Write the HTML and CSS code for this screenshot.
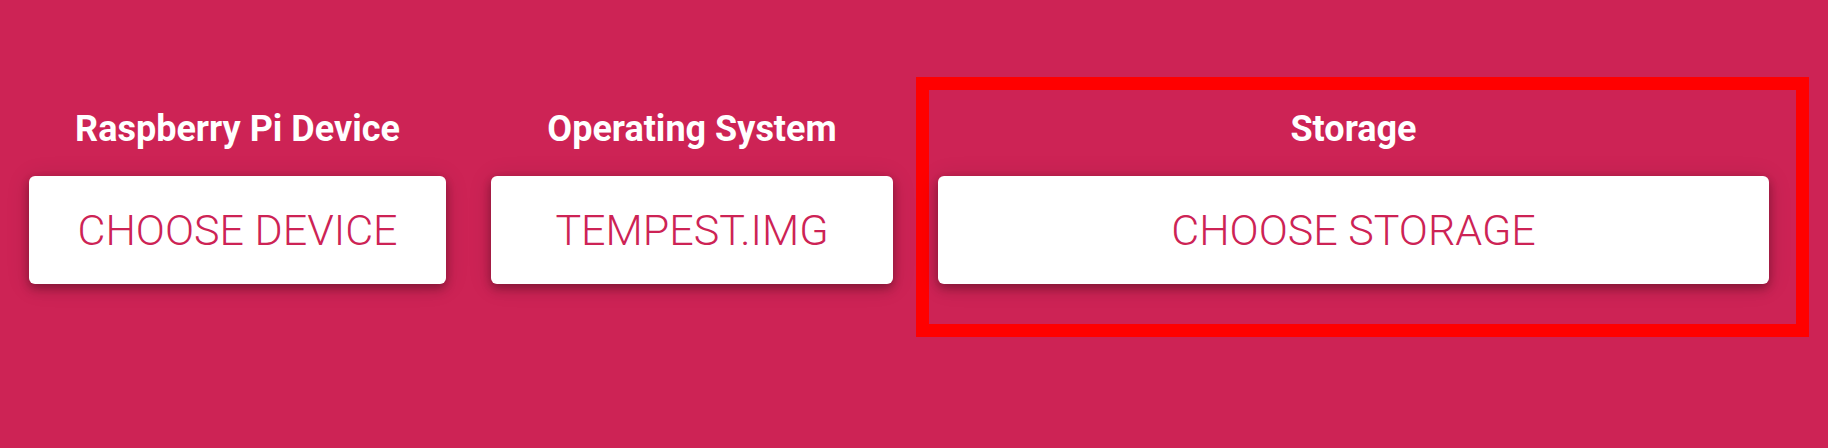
FILE: index.html
```html
<!DOCTYPE html>
<html lang="en">
<head>
<meta charset="utf-8">
<meta name="viewport" content="width=device-width, initial-scale=1">
<title>Raspberry Pi Imager</title>
<link rel="stylesheet" href="styles.css">
</head>
<body>
<main class="steps">
  <section class="step">
    <h2 class="step-title" id="device-title">Raspberry Pi Device</h2>
    <button class="step-button" type="button" aria-describedby="device-title">CHOOSE DEVICE</button>
  </section>
  <section class="step step-system">
    <h2 class="step-title" id="system-title">Operating System</h2>
    <button class="step-button" type="button" aria-describedby="system-title">TEMPEST.IMG</button>
  </section>
  <section class="step step-storage">
    <h2 class="step-title" id="storage-title">Storage</h2>
    <button class="step-button" type="button" aria-describedby="storage-title">CHOOSE STORAGE</button>
  </section>
</main>
</body>
</html>
```

FILE: styles.css
```css
* {
  box-sizing: border-box;
}

body {
  margin: 0;
  background: #cd2355;
  font-family: Roboto, "Liberation Sans", sans-serif;
}

.steps {
  display: grid;
  grid-template-columns: 417fr 424fr 893fr;
  column-gap: 23px;
  padding: 77px 19px 0 29px;
}

.step {
  display: flex;
  flex-direction: column;
  gap: 26px;
  padding-top: 31px;
}

.step-system {
  padding-left: 22px;
}

.step-storage {
  border: 13px solid #f00;
  padding: 18px 27px 40px 9px;
}

.step-title {
  margin: 0;
  color: #fff;
  font-size: 36px;
  font-weight: 700;
  line-height: 42px;
  text-align: center;
}

.step-button {
  padding: 29px 24px;
  border: 0;
  border-radius: 6px;
  background: #fff;
  color: #cd2355;
  font-family: inherit;
  font-size: 43px;
  font-weight: 300;
  line-height: 50px;
  box-shadow:
    0 2px 24px rgb(0 0 0 / 12%),
    0 6px 12px rgb(0 0 0 / 14%),
    0 3px 8px rgb(0 0 0 / 20%);
}
```
